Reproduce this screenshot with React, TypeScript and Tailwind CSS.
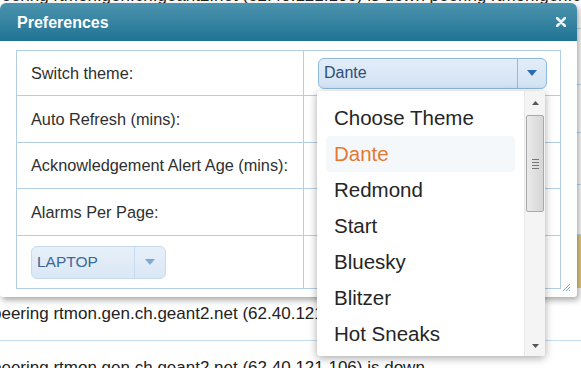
const ROWS = [
  { label: "Switch theme:", h: "h-[45px]" },
  { label: "Auto Refresh (mins):", h: "h-[47px]" },
  { label: "Acknowledgement Alert Age (mins):", h: "h-[46px]" },
  { label: "Alarms Per Page:", h: "h-[47px]" },
];

const THEMES = ["Choose Theme", "Dante", "Redmond", "Start", "Bluesky", "Blitzer", "Hot Sneaks"];

const LINE = "peering rtmon.gen.ch.geant2.net (62.40.121.106) is down";

function Caret({ className }: { className: string }) {
  return (
    <svg width="10" height="6" viewBox="0 0 10 6" className={className}>
      <path d="M0 0h10L5 6z" fill="currentColor" />
    </svg>
  );
}

function ThemeList() {
  return (
    <div className="absolute left-[317px] top-[91px] w-[228px] h-[265px] bg-white rounded-[3px] shadow-[0_2px_8px_rgba(0,0,0,0.35)] flex overflow-hidden">
      <ul className="flex-1 pt-[9px] pl-[9px] pr-[9px]">
        {THEMES.map((t) => (
          <li
            key={t}
            className={
              "h-[36px] px-[8px] flex items-center text-[20.5px] rounded-[4px] " +
              (t === "Dante" ? "bg-[#f5f8fb] text-[#e5782f]" : "text-[#252525]")
            }
          >
            {t}
          </li>
        ))}
      </ul>
      <div className="w-[21px] bg-[#f4f4f4] border-l border-[#e8e8e8] flex flex-col items-center">
        <div className="h-[24px] flex items-center justify-center text-[#555]">
          <svg width="7" height="4" viewBox="0 0 7 4"><path d="M0 4h7L3.5 0z" fill="currentColor" /></svg>
        </div>
        <div className="w-[18px] h-[97px] rounded-[2px] border border-[#a9a9a9] bg-gradient-to-r from-[#eaeaea] to-[#d6d6d6] flex flex-col items-center justify-center gap-[2px]">
          <span className="w-[7px] h-px bg-[#777]" />
          <span className="w-[7px] h-px bg-[#777]" />
          <span className="w-[7px] h-px bg-[#777]" />
          <span className="w-[7px] h-px bg-[#777]" />
        </div>
        <div className="flex-1" />
        <div className="h-[20px] flex items-center justify-center text-[#555]">
          <svg width="7" height="4" viewBox="0 0 7 4"><path d="M0 0h7L3.5 4z" fill="currentColor" /></svg>
        </div>
      </div>
    </div>
  );
}

function Preferences() {
  return (
    <div className="absolute left-0 top-[3px] w-[577px] h-[294px] bg-white rounded-t-[6px] rounded-b-[3px] shadow-[2px_3px_6px_rgba(0,0,0,0.35)] flex flex-col">
      <div className="h-[38px] rounded-t-[6px] bg-gradient-to-b from-[#4b93ae] to-[#1e7494] flex items-center justify-between pl-[17px] pr-[11px]">
        <span className="text-white font-bold text-[16px] mt-[1px]">Preferences</span>
        <svg width="10" height="10" viewBox="0 0 10 10" className="mt-[-1px]">
          <path d="M1 1l8 8M9 1l-8 8" stroke="#eaf2f5" strokeWidth="2.6" strokeLinecap="round" />
        </svg>
      </div>
      <div className="flex-1 pt-[9px] px-[16px] relative">
        <div className="w-[545px] border border-[#b3cfe8] flex flex-col">
          {ROWS.map((r, i) => (
            <div key={r.label} className={"flex border-b border-[#b3cfe8] " + r.h}>
              <div className="w-[287px] border-r border-[#b3cfe8] flex items-center pl-[14px] text-[16.3px] text-[#2f2f2f]">
                {r.label}
              </div>
              <div className="flex-1 flex items-center pl-[14px]">
                {i === 0 && (
                  <div className="w-[229px] h-[31px] rounded-[6px] border border-[#8fbbe0] bg-gradient-to-b from-[#e2edf8] to-[#d3e3f4] flex">
                    <span className="flex-1 flex items-center pl-[5px] text-[16px] text-[#2d4f7a]">Dante</span>
                    <span className="w-[29px] border-l border-[#8fbbe0] flex items-center justify-center">
                      <Caret className="text-[#2a6db0]" />
                    </span>
                  </div>
                )}
              </div>
            </div>
          ))}
          <div className="flex h-[52px]">
            <div className="w-[287px] border-r border-[#b3cfe8] flex items-center pl-[14px]">
              <div className="w-[135px] h-[33px] rounded-[6px] border border-[#c6dbef] bg-gradient-to-b from-[#e7f0f9] to-[#dae7f5] flex">
                <span className="flex-1 flex items-center pl-[5px] text-[15.5px] text-[#3a6898]">LAPTOP</span>
                <span className="w-[31px] border-l border-[#c6dbef] flex items-center justify-center">
                  <Caret className="text-[#7fa9d3]" />
                </span>
              </div>
            </div>
            <div className="flex-1" />
          </div>
        </div>
        <svg width="9" height="9" viewBox="0 0 9 9" className="absolute right-[6px] bottom-[5px]">
          <path d="M8 1L1 8M8 4L4 8M8 7L7 8" stroke="#7fa9d3" strokeWidth="1" />
        </svg>
      </div>
    </div>
  );
}

export default function App() {
  return (
    <div className="relative w-[581px] h-[368px] overflow-hidden bg-white font-['Liberation_Sans',Arial,sans-serif]">
      <div className="flex flex-col">
        <div className="h-[3px] overflow-hidden">
          <p className="mt-[-17px] ml-[-8px] text-[17px] text-[#222] whitespace-nowrap">{LINE} {LINE}</p>
        </div>
        <div className="h-[26px] border-b border-[#c6dcef]" />
        <div className="h-[56px] border-b border-[#c6dcef]" />
        <div className="h-[48px] border-b border-[#c6dcef]" />
        <div className="h-[52px] border-b border-[#c6dcef]" />
        <div className="h-[50px] border-b border-[#c6dcef]" />
        <div className="h-[53px] bg-[#e6cf7e]" />
        <div className="h-[53px] border-b border-[#c6dcef] flex items-center">
          <p className="ml-[-8px] text-[17px] text-[#222] whitespace-nowrap">{LINE}</p>
        </div>
        <div className="pt-[14px]">
          <p className="ml-[-8px] text-[17px] text-[#222] whitespace-nowrap">{LINE}</p>
        </div>
      </div>
      <Preferences />
      <ThemeList />
    </div>
  );
}
